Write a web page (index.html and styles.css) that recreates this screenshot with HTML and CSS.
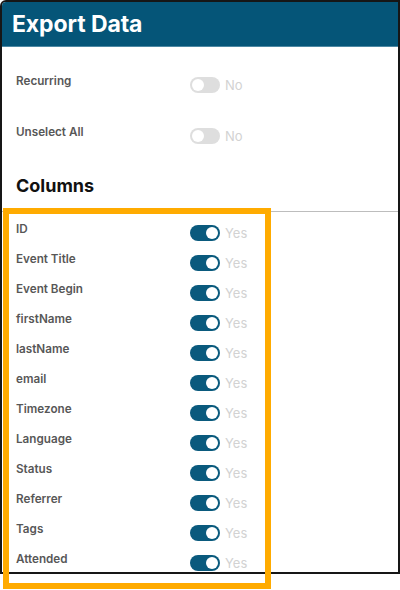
FILE: index.html
```html
<!DOCTYPE html>
<html>
<head>
<meta charset="utf-8">
<link rel="stylesheet" href="styles.css">
</head>
<body>
<div class="frame">
  <div class="header"><h1 class="title">Export Data</h1></div>
  <div class="options">
    <div class="row row-option">
      <span class="label">Recurring</span>
      <span class="switch-group"><span class="switch off"><span class="knob"></span></span><span class="state">No</span></span>
    </div>
    <div class="row row-option">
      <span class="label">Unselect All</span>
      <span class="switch-group"><span class="switch off"><span class="knob"></span></span><span class="state">No</span></span>
    </div>
    <h2 class="section-title">Columns</h2>
  </div>
  <div class="columns">
    <div class="row"><span class="label">ID</span><span class="switch-group"><span class="switch on"><span class="knob"></span></span><span class="state">Yes</span></span></div>
    <div class="row"><span class="label">Event Title</span><span class="switch-group"><span class="switch on"><span class="knob"></span></span><span class="state">Yes</span></span></div>
    <div class="row"><span class="label">Event Begin</span><span class="switch-group"><span class="switch on"><span class="knob"></span></span><span class="state">Yes</span></span></div>
    <div class="row"><span class="label">firstName</span><span class="switch-group"><span class="switch on"><span class="knob"></span></span><span class="state">Yes</span></span></div>
    <div class="row"><span class="label">lastName</span><span class="switch-group"><span class="switch on"><span class="knob"></span></span><span class="state">Yes</span></span></div>
    <div class="row"><span class="label">email</span><span class="switch-group"><span class="switch on"><span class="knob"></span></span><span class="state">Yes</span></span></div>
    <div class="row"><span class="label">Timezone</span><span class="switch-group"><span class="switch on"><span class="knob"></span></span><span class="state">Yes</span></span></div>
    <div class="row"><span class="label">Language</span><span class="switch-group"><span class="switch on"><span class="knob"></span></span><span class="state">Yes</span></span></div>
    <div class="row"><span class="label">Status</span><span class="switch-group"><span class="switch on"><span class="knob"></span></span><span class="state">Yes</span></span></div>
    <div class="row"><span class="label">Referrer</span><span class="switch-group"><span class="switch on"><span class="knob"></span></span><span class="state">Yes</span></span></div>
    <div class="row"><span class="label">Tags</span><span class="switch-group"><span class="switch on"><span class="knob"></span></span><span class="state">Yes</span></span></div>
    <div class="row"><span class="label">Attended</span><span class="switch-group"><span class="switch on"><span class="knob"></span></span><span class="state">Yes</span></span></div>
  </div>
</div>
<div class="highlight"></div>
</body>
</html>
```

FILE: styles.css
```css
* { box-sizing: border-box; }
html, body { margin: 0; padding: 0; background: #fff; }
body {
  font-family: Inter, "Noto Sans", "Liberation Sans", sans-serif;
  width: 400px;
  height: 590px;
  position: relative;
  overflow: hidden;
}
.frame {
  width: 400px;
  height: 574px;
  border: 2px solid #161616;
  border-top-left-radius: 6px;
  overflow: hidden;
  background: #fff;
}
.header {
  height: 45px;
  background: #055578;
  border-bottom: 1px solid #4d88a3;
  padding: 0 10px;
  display: flex;
  align-items: center;
}
.title {
  margin: 0;
  color: #fff;
  font-size: 23px;
  font-weight: 700;
  letter-spacing: -0.1px;
}
.options {
  padding: 25px 14px 14px;
  border-bottom: 1px solid #bdbdbd;
}
.row {
  display: flex;
  align-items: flex-start;
  height: 30px;
}
.row-option { height: 51px; }
.label {
  width: 174px;
  padding-top: 1px;
  font-size: 11.7px;
  line-height: 16px;
  font-weight: 600;
  color: #575757;
}
.switch-group {
  display: flex;
  align-items: center;
  margin-top: 5px;
}
.switch {
  width: 30px;
  height: 16px;
  border-radius: 8px;
  padding: 2px;
  display: flex;
}
.switch.off { background: #dedede; justify-content: flex-start; }
.switch.on { background: #0a5a7d; justify-content: flex-end; }
.knob {
  width: 12px;
  height: 12px;
  border-radius: 50%;
  background: #fff;
}
.state {
  margin-left: 5px;
  font-size: 13px;
  color: #d2d2d2;
}
.section-title {
  margin: 0;
  font-size: 18px;
  line-height: 22px;
  font-weight: 700;
  color: #111;
  margin-top: 1px;
}
.columns {
  padding: 8px 14px 0;
}
.highlight {
  position: absolute;
  left: 3px;
  top: 208px;
  width: 268px;
  height: 381px;
  border: 6px solid #ffab00;
}
```
